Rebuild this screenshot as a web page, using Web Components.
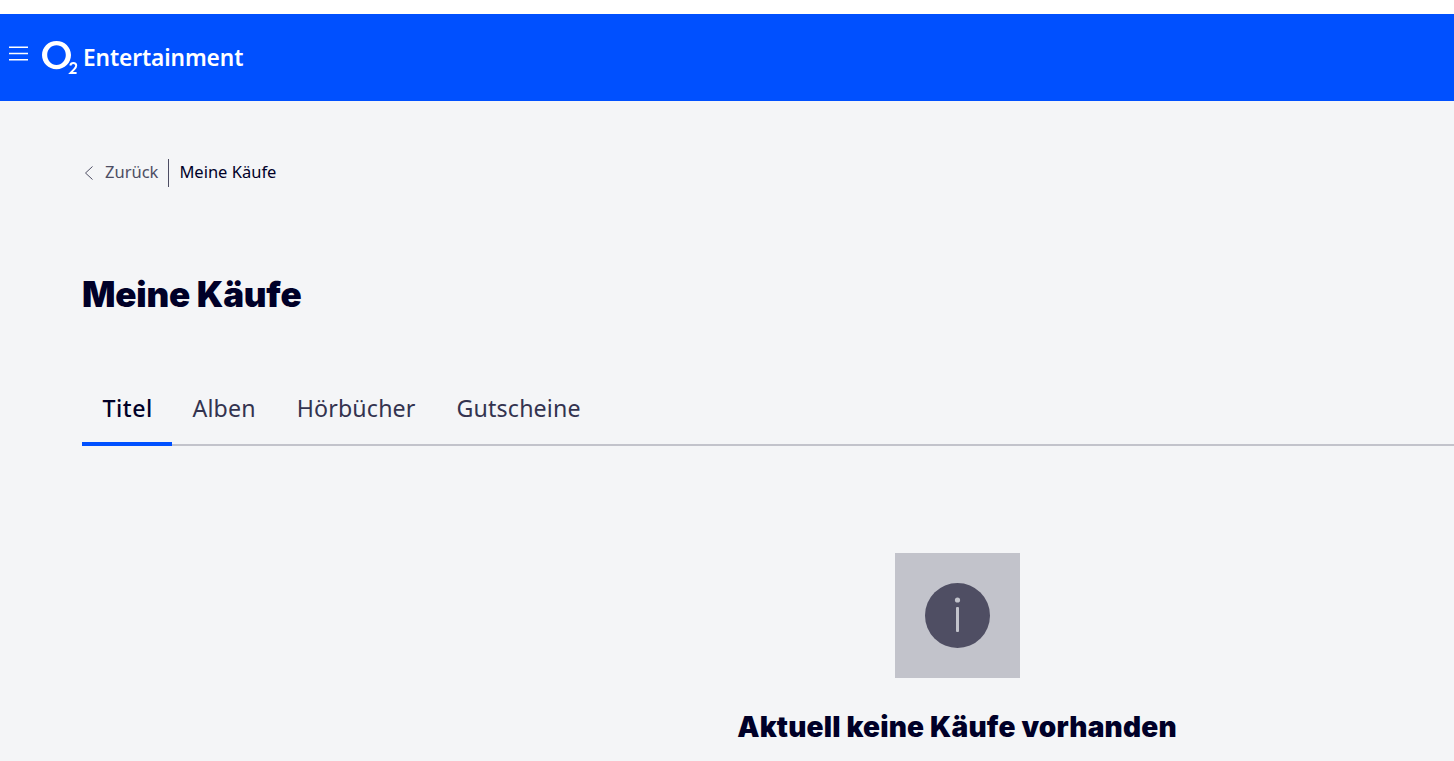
<!DOCTYPE html>
<html lang="de">
<head>
<meta charset="utf-8">
<title>Meine Käufe</title>
<style>
  html, body { margin: 0; height: 761px; overflow: hidden; background: #f4f5f7; }
  body { font-family: "Noto Sans", sans-serif; color: #000028; padding-top: 14px; box-sizing: border-box; }
  body::before { content: ""; position: absolute; top: 0; left: 0; right: 0; height: 14px; background: #fff; }
</style>
</head>
<body>
<o2-header>Entertainment</o2-header>
<o2-page>
  <o2-breadcrumb back="Zurück">Meine Käufe</o2-breadcrumb>
  <h1 slot="title">Meine Käufe</h1>
  <o2-tabs slot="tabs" items="Titel,Alben,Hörbücher,Gutscheine"></o2-tabs>
  <o2-empty slot="empty">Aktuell keine Käufe vorhanden</o2-empty>
</o2-page>
<script>
class o2Header extends HTMLElement {
  constructor() {
    super();
    this.attachShadow({ mode: 'open' });
    this.shadowRoot.innerHTML = `
      <style>
        :host { display: flex; align-items: center; height: 87px; background: #0050ff; color: #fff; padding-left: 9px; box-sizing: border-box; }
        .menu { width: 19px; height: 15px; display: block; margin: -9px 14px 0 0; }
        .logo { width: 37px; height: 34px; display: block; margin-top: 1px; }
        .name { font-size: 22.7px; font-weight: 600; margin-left: 4px; letter-spacing: -.1px; line-height: 30px; }
      </style>
      <svg class="menu" viewBox="0 0 19 15" fill="none" stroke="#fff" stroke-width="1.6">
        <path d="M0 1.2h19M0 7.5h19M0 13.8h19"/>
      </svg>
      <svg class="logo" viewBox="0 0 37 34" fill="none" stroke="#fff">
        <path fill="#fff" stroke="none" fill-rule="evenodd" d="M14.5 0C22.6 0 29 6.2 29 14s-6.4 14.2-14.5 14.2S0 21.8 0 14 6.4 0 14.5 0zM14.5 4.300C9.300 4.300 5.200 8.500 5.200 14s4.100 9.900 9.300 9.900S23.800 19.500 23.800 14 19.700 4.300 14.500 4.300z"/>
        <path d="M28.300 24.400c.4-1.700 1.500-2.500 3-2.500 1.700 0 2.900 1.100 2.900 2.600 0 1.300-.7 2.300-1.900 3.600l-3.800 4h6.100" stroke-width="2"/>
      </svg>
      <span class="name"><slot></slot></span>
    `;
  }
}

class o2Page extends HTMLElement {
  constructor() {
    super();
    this.attachShadow({ mode: 'open' });
    this.shadowRoot.innerHTML = `
      <style>
        :host { display: block; }
        .crumb { padding: 58px 0 0 82px; }
        .title { padding: 0 0 0 82px; }
        ::slotted(h1) { margin: 82px 0 0; font-family: Inter, sans-serif; font-size: 35px; font-weight: 900; line-height: 50px; letter-spacing: -.2px; }
        .tabs { padding-left: 82px; margin-top: 67px; }
        .empty { margin-top: 107px; padding-left: 460px; }
      </style>
      <div class="crumb"><slot></slot></div>
      <div class="title"><slot name="title"></slot></div>
      <div class="tabs"><slot name="tabs"></slot></div>
      <div class="empty"><slot name="empty"></slot></div>
    `;
  }
}

class o2Breadcrumb extends HTMLElement {
  constructor() {
    super();
    this.attachShadow({ mode: 'open' });
    this.shadowRoot.innerHTML = `
      <style>
        :host { display: flex; align-items: center; height: 28px; font-size: 16.5px; }
        svg { width: 10px; height: 14px; display: block; margin: 0 0 0 2px; }
        .back { color: #4d4d63; margin-left: 11px; }
        .sep { width: 1px; height: 28px; background: #4d4d63; margin: 0 10px; }
        span:not(.sep) { position: relative; top: -2px; }
      </style>
      <svg viewBox="0 0 10 14" fill="none" stroke="#4d4d63" stroke-width="1"><path d="M8.500 .5 1.500 7l7 6.500"/></svg>
      <span class="back">${this.getAttribute('back')}</span>
      <span class="sep"></span>
      <span><slot></slot></span>
    `;
  }
}

class o2Tabs extends HTMLElement {
  constructor() {
    super();
    this.attachShadow({ mode: 'open' });
    const tabs = this.getAttribute('items').split(',').map((t, i) => `<div class="tab${i === 0 ? ' on' : ''}">${t}</div>`).join('');
    this.shadowRoot.innerHTML = `
      <style>
        :host { display: flex; height: 60px; border-bottom: 2px solid #c2c3cb; font-size: 23.2px; letter-spacing: .15px; color: #33334f; box-sizing: border-box; }
        .tab { padding: 0 20.5px; line-height: 45px; position: relative; height: 60px; box-sizing: border-box; }
        .on { color: #000028; font-weight: 500; width: 90px; padding: 0 0 0 20.5px; letter-spacing: .5px; }
        .on::after { content: ""; position: absolute; left: 0; right: 0; bottom: 0; height: 4px; background: #0050ff; }
      </style>
      ${tabs}
    `;
  }
}

class o2Empty extends HTMLElement {
  constructor() {
    super();
    this.attachShadow({ mode: 'open' });
    this.shadowRoot.innerHTML = `
      <style>
        :host { display: flex; flex-direction: column; align-items: center; width: 994px; }
        .box { width: 125px; height: 125px; background: #c2c3cb; display: flex; align-items: center; justify-content: center; }
        svg { width: 65px; height: 65px; display: block; }
        .msg { margin-top: 30px; font-family: Inter, sans-serif; font-size: 28px; font-weight: 900; line-height: 38px; letter-spacing: .2px; white-space: nowrap; }
      </style>
      <div class="box">
        <svg viewBox="0 0 65 65">
          <circle cx="32.5" cy="32.5" r="32.5" fill="#4f4e63"/>
          <circle cx="32.5" cy="17" r="2.6" fill="#c2c3cb"/>
          <rect x="31" y="24" width="3" height="25" rx="1" fill="#c2c3cb"/>
        </svg>
      </div>
      <div class="msg"><slot></slot></div>
    `;
  }
}

customElements.define('o2-header', o2Header);
customElements.define('o2-page', o2Page);
customElements.define('o2-breadcrumb', o2Breadcrumb);
customElements.define('o2-tabs', o2Tabs);
customElements.define('o2-empty', o2Empty);
</script>
</body>
</html>
